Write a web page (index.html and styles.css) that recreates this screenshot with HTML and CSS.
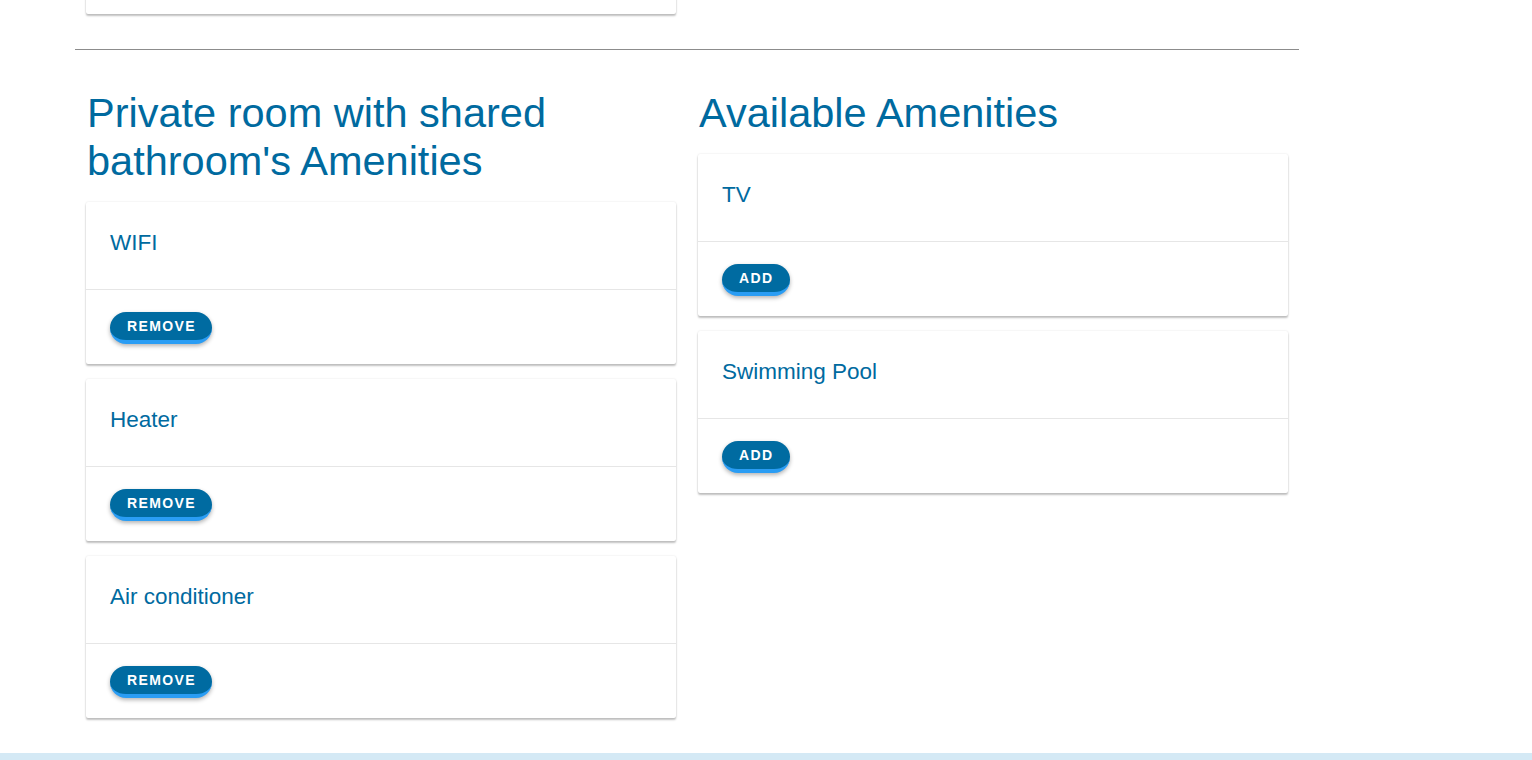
FILE: index.html
```html
<!DOCTYPE html>
<html>
<head>
<meta charset="utf-8">
<link rel="stylesheet" href="styles.css">
</head>
<body>
<div class="page">
  <div class="container">
    <div class="prev-card"></div>
    <hr class="divider">
    <div class="columns">
      <section class="column">
        <h2 class="heading">Private room with shared bathroom's Amenities</h2>
        <div class="card">
          <div class="card-body">WIFI</div>
          <div class="card-actions"><button class="btn">REMOVE</button></div>
        </div>
        <div class="card">
          <div class="card-body">Heater</div>
          <div class="card-actions"><button class="btn">REMOVE</button></div>
        </div>
        <div class="card">
          <div class="card-body">Air conditioner</div>
          <div class="card-actions"><button class="btn">REMOVE</button></div>
        </div>
      </section>
      <section class="column">
        <h2 class="heading">Available Amenities</h2>
        <div class="card">
          <div class="card-body">TV</div>
          <div class="card-actions"><button class="btn">ADD</button></div>
        </div>
        <div class="card">
          <div class="card-body">Swimming Pool</div>
          <div class="card-actions"><button class="btn">ADD</button></div>
        </div>
      </section>
    </div>
  </div>
  <footer class="footer"></footer>
</div>
</body>
</html>
```

FILE: styles.css
```css
html, body {
  margin: 0;
  padding: 0;
  background: #ffffff;
  font-family: "Liberation Sans", Arial, sans-serif;
  overflow: hidden;
}

.page {
  min-height: 760px;
  display: flex;
  flex-direction: column;
}

.container {
  width: 1224px;
  margin-left: 75px;
  padding-bottom: 35px;
}

.prev-card {
  margin: -86px 11px 0 11px;
  width: 590px;
  height: 100px;
  background: #fff;
  border-radius: 2px;
  box-shadow: 0 2px 2px rgba(0,0,0,0.24), 0 0 2px rgba(0,0,0,0.12);
}

.divider {
  margin: 35px 0 0 0;
  border: 0;
  border-top: 1px solid #8c8c8c;
  height: 0;
}

.columns {
  display: grid;
  grid-template-columns: 612px 612px;
}

.column {
  padding: 0 11px;
  display: flex;
  flex-direction: column;
  gap: 15px;
}

.heading {
  margin: 39px 0 2px 1px;
  font-size: 41.5px;
  line-height: 48px;
  font-weight: normal;
  color: #006a9f;
  width: 500px;
}

.card {
  width: 590px;
  background: #fff;
  border-radius: 2px;
  box-shadow: 0 2px 2px rgba(0,0,0,0.24), 0 0 2px rgba(0,0,0,0.12);
}

.card-body {
  height: 88px;
  box-sizing: border-box;
  padding: 27px 24px 0 24px;
  font-size: 22.5px;
  line-height: 28px;
  color: #006a9f;
  border-bottom: 1px solid #e6e6e6;
}

.card-actions {
  height: 74px;
  box-sizing: border-box;
  padding: 22px 24px 0 24px;
}

.btn {
  display: inline-block;
  height: 32px;
  padding: 0 16px 0 17px;
  border: 0;
  border-bottom: 4px solid #2a9df4;
  border-radius: 16px;
  background: #006ba1;
  color: #fff;
  font-family: "Liberation Sans", Arial, sans-serif;
  font-weight: bold;
  font-size: 14px;
  letter-spacing: 1.4px;
  line-height: 28px;
  box-shadow: 0 2px 4px rgba(0,0,0,0.3);
  cursor: pointer;
}

.footer {
  margin-top: auto;
  height: 7px;
  background: #d4e9f5;
}
```
